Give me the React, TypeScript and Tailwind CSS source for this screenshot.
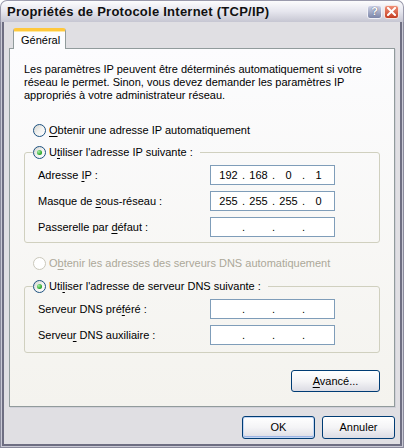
import React from 'react'

const ui = "font-['Liberation_Sans',Arial,sans-serif] text-[11px] leading-[13px] text-black"

function Radio({ checked, disabled }: { checked?: boolean; disabled?: boolean }) {
  return (
    <span
      className={
        disabled
          ? 'w-[13px] h-[13px] shrink-0 rounded-full border border-[#cac8bb] bg-white'
          : 'w-[13px] h-[13px] shrink-0 rounded-full border border-[#1c5180] bg-gradient-to-br from-[#d4d4ce] via-[#f2f2f0] to-white flex items-center justify-center'
      }
    >
      {checked && (
        <span className="w-[5px] h-[5px] rounded-full bg-[radial-gradient(circle_at_35%_35%,#a6f0a6,#21a121_70%)]" />
      )}
    </span>
  )
}

function U({ children }: { children: React.ReactNode }) {
  return <span className="underline underline-offset-[2px]">{children}</span>
}

function IpBox({ values }: { values: string[] }) {
  return (
    <div className="w-[125px] h-[20px] shrink-0 border border-[#7f9db9] bg-white flex items-center pl-[4px]">
      {values.map((v, i) => (
        <React.Fragment key={i}>
          <span className="w-[27px] text-center">{v}</span>
          {i < 3 && <span className="w-[3px] flex justify-center">.</span>}
        </React.Fragment>
      ))}
    </div>
  )
}

function Row({ label, values }: { label: React.ReactNode; values: string[] }) {
  return (
    <div className="flex items-center h-[20px]">
      <span className="flex-1 pl-[13px]">{label}</span>
      <IpBox values={values} />
    </div>
  )
}

function XpButton({ children, primary }: { children: React.ReactNode; primary?: boolean }) {
  return (
    <button
      className={
        primary
          ? 'w-[73px] h-[23px] rounded-[3px] border border-[#003c74] bg-gradient-to-b from-white via-[#f4f4f6] to-[#dcdce4] shadow-[inset_0_0_0_1px_#c2d6f4,inset_0_-1px_0_1px_#9db4e4] flex items-center justify-center'
          : 'w-[73px] h-[23px] rounded-[3px] border border-[#003c74] bg-gradient-to-b from-white via-[#f4f4f6] to-[#dcdce4] flex items-center justify-center'
      }
    >
      {children}
    </button>
  )
}

const empty = ['', '', '', '']

export default function App() {
  return (
    <div className={`w-[404px] h-[448px] flex flex-col ${ui}`}>
      {/* title bar */}
      <div className="h-[22px] shrink-0 rounded-t-[7px] bg-gradient-to-b from-[#fcfcfd] via-[#e6e6ee] to-[#c6c6d2] border-x border-t border-[#9a9aac] flex items-center justify-between pl-[6px] pr-[4px]">
        <span className="font-bold text-[13px] tracking-[0.25px] text-[#111]">Propriétés de Protocole Internet (TCP/IP)</span>
        <div className="flex items-center gap-[2px]">
          <span className="w-[15px] h-[14px] rounded-[3px] border border-[#f2f2f8] bg-gradient-to-b from-[#cfd3e6] to-[#7c85a8] flex items-center justify-center font-bold text-[11px] text-white [text-shadow:0_0_1px_#2a3050]">
            ?
          </span>
          <span className="w-[15px] h-[14px] rounded-[3px] border border-[#f6e6e0] bg-gradient-to-b from-[#ef8e76] to-[#c43c20] flex items-center justify-center">
            <svg width="9" height="9" viewBox="0 0 9 9">
              <path d="M1 1 L8 8 M8 1 L1 8" stroke="white" strokeWidth="2" strokeLinecap="square" />
            </svg>
          </span>
        </div>
      </div>

      {/* frame + body */}
      <div className="flex-1 flex flex-col border-x border-b border-[#8a8a9c]">
        <div className="flex-1 flex flex-col border-x border-b border-[#cacad6]">
          <div className="flex-1 flex flex-col border-x-2 border-b-2 border-[#6e6e82] bg-[#e0dfe3] pt-[6px] px-[5px]">
            {/* tab */}
            <div className="flex pl-[4px]">
              <div className="relative z-10 -mb-[1px] w-[53px] h-[21px] bg-[#fcfcfe] border-x border-[#919b9c] border-t-[3px] border-t-[#ffc83c] shadow-[inset_0_1px_0_#ffe8a0] rounded-t-[3px] flex items-center pl-[7px]">
                Général
              </div>
            </div>

            {/* panel */}
            <div className="h-[359px] border border-[#919b9c] bg-gradient-to-b from-[#fcfcfe] to-[#f4f3ee] shadow-[1px_1px_0_#d0d0d8] pt-[14px] px-[14px]">
              <p>
                Les paramètres IP peuvent être déterminés automatiquement si votre
                <br />
                réseau le permet. Sinon, vous devez demander les paramètres IP
                <br />
                appropriés à votre administrateur réseau.
              </p>

              <div className="mt-[22px] h-[13px] flex items-center gap-[3px] pl-[9px]">
                <Radio />
                <span>
                  <U>O</U>btenir une adresse IP automatiquement
                </span>
              </div>

              <fieldset className="mt-[9px] border border-[#d0d0bf] rounded-[3px] pr-[44px] pb-[5px]">
                <legend className="ml-[8px] pr-[7px] h-[13px] flex items-center gap-[3px]">
                  <Radio checked />
                  <span>
                    U<U>t</U>iliser l'adresse IP suivante :
                  </span>
                </legend>
                <div className="pt-[6px] flex flex-col gap-[6px]">
                  <Row label={<>Adresse <U>I</U>P :</>} values={['192', '168', '0', '1']} />
                  <Row label={<>Masque de <U>s</U>ous-réseau :</>} values={['255', '255', '255', '0']} />
                  <Row label={<>Passerelle par <U>d</U>éfaut :</>} values={empty} />
                </div>
              </fieldset>

              <div className="mt-[14px] h-[13px] flex items-center gap-[3px] pl-[9px] text-[#aca899]">
                <Radio disabled />
                <span>
                  O<U>b</U>tenir les adresses des serveurs DNS automatiquement
                </span>
              </div>

              <fieldset className="mt-[10px] border border-[#d0d0bf] rounded-[3px] pr-[44px] pb-[7px]">
                <legend className="ml-[8px] pr-[7px] h-[13px] flex items-center gap-[3px]">
                  <Radio checked />
                  <span>
                    Uti<U>l</U>iser l'adresse de serveur DNS suivante :
                  </span>
                </legend>
                <div className="pt-[6px] flex flex-col gap-[6px]">
                  <Row label={<>Serveur DNS pré<U>f</U>éré :</>} values={empty} />
                  <Row label={<>Serveu<U>r</U> DNS auxiliaire :</>} values={empty} />
                </div>
              </fieldset>

              <div className="mt-[17px] flex justify-end">
                <button className="w-[89px] h-[22px] rounded-[3px] border border-[#003c74] bg-gradient-to-b from-white via-[#f4f4f6] to-[#dcdce4] flex items-center justify-center">
                  <span>
                    <U>A</U>vancé...
                  </span>
                </button>
              </div>
            </div>

            <div className="mt-[9px] flex justify-end gap-[7px]">
              <XpButton primary>OK</XpButton>
              <XpButton>Annuler</XpButton>
            </div>
          </div>
        </div>
      </div>
    </div>
  )
}
